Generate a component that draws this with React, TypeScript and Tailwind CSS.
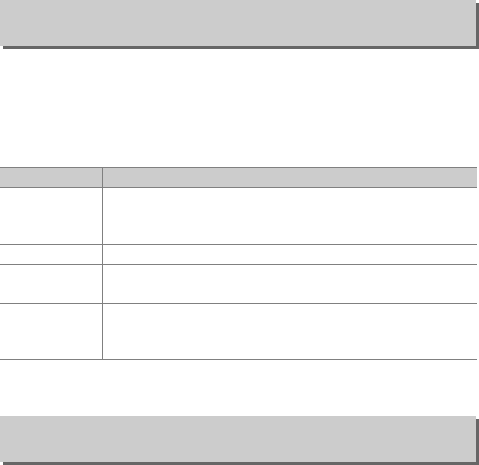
const rows = [
    { h: "h-[20px]", head: true },
    { h: "h-[57px]" },
    { h: "h-[20px]" },
    { h: "h-[39px]" },
    { h: "h-[56px]" },
];

const Panel = () => (
    <div className="h-[46px] w-[476px] bg-[#cccccc] shadow-[3px_3px_0_#666666]" />
);

export default function App() {
    return (
        <div className="w-[479px] h-[465px] bg-white font-['Liberation_Sans',sans-serif]">
            <Panel />

            <div className="mt-[121px] w-[477px] border-t border-[#808080]">
                {rows.map((row, i) => (
                    <div
                        key={i}
                        className={`flex ${row.h} border-b border-[#808080] ${row.head ? "bg-[#cccccc]" : ""}`}
                    >
                        <div className="w-[103px] border-r border-[#808080]" />
                        <div className="flex-1" />
                    </div>
                ))}
            </div>

            <div className="mt-[56px]">
                <Panel />
            </div>
        </div>
    );
}
